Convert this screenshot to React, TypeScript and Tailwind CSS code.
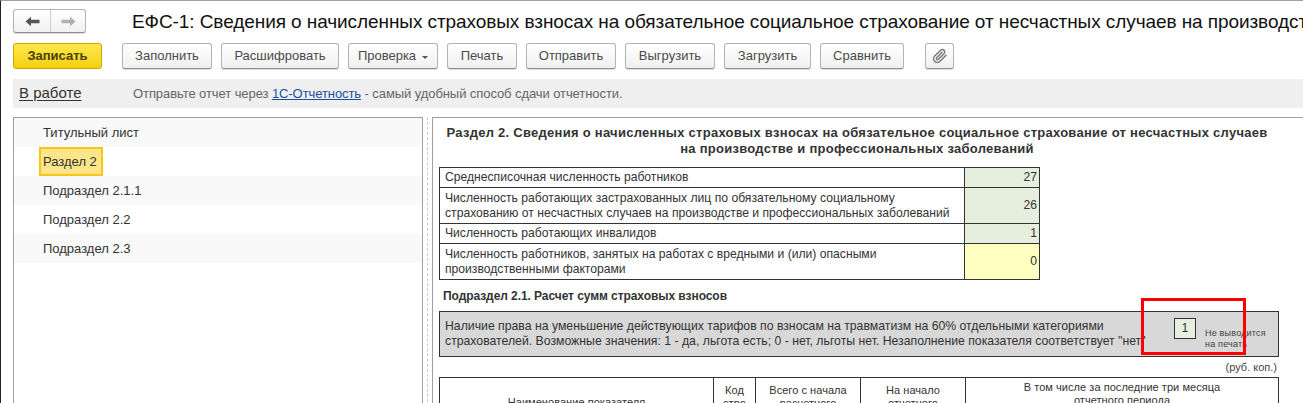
const toolbarButtons = [
  { label: 'Заполнить', width: 'w-[90px]' },
  { label: 'Расшифровать', width: 'w-[118px]' },
  { label: 'Проверка', width: 'w-[90px]', menu: true },
  { label: 'Печать', width: 'w-[70px]' },
  { label: 'Отправить', width: 'w-[90px]' },
  { label: 'Выгрузить', width: 'w-[90px]' },
  { label: 'Загрузить', width: 'w-[87px]' },
  { label: 'Сравнить', width: 'w-[84px]' },
]

const sections = ['Титульный лист', 'Раздел 2', 'Подраздел 2.1.1', 'Подраздел 2.2', 'Подраздел 2.3']

const summaryRows = [
  { text: ['Среднесписочная численность работников'], value: '27', h: 'h-[20px]', fill: 'bg-[#e6efdd]' },
  {
    text: [
      'Численность работающих застрахованных лиц по обязательному социальному',
      'страхованию от несчастных случаев на производстве и профессиональных заболеваний',
    ],
    value: '26',
    h: 'h-[36px]',
    fill: 'bg-[#e6efdd]',
  },
  { text: ['Численность работающих инвалидов'], value: '1', h: 'h-[20px]', fill: 'bg-[#e6efdd]' },
  {
    text: ['Численность работников, занятых на работах с вредными и (или) опасными', 'производственными факторами'],
    value: '0',
    h: 'h-[36px]',
    fill: 'bg-[#ffffc0]',
  },
]

function ArrowIcon({ dir, color }: { dir: 'left' | 'right'; color: string }) {
  return (
    <svg width="15" height="11" viewBox="0 0 15 11" className={dir === 'right' ? 'rotate-180' : ''}>
      <path d="M0.5 5.5 L6 0.8 L6 3.8 L14.5 3.8 L14.5 7.2 L6 7.2 L6 10.2 Z" fill={color} />
    </svg>
  )
}

function ClipIcon() {
  return (
    <svg width="16" height="16" viewBox="0 0 24 24" fill="none" stroke="#7a7a7a" strokeWidth="2.2" strokeLinecap="round">
      <path d="M21 11 L12 20 a5 5 0 0 1 -8 -8 L13 3.5 a3.4 3.4 0 0 1 5 5 L9.5 17 a1.7 1.7 0 0 1 -2.5 -2.5 L15 6.5" />
    </svg>
  )
}

function ToolButton({ label, width, menu }: { label: string; width: string; menu?: boolean }) {
  return (
    <button className={`${width} h-[26px] shrink-0 flex items-center justify-center gap-[6px] rounded-[3px] border border-[#b4b4b4] border-b-[#8e8e8e] bg-gradient-to-b from-white to-[#f0f0f0] text-[13px] text-[#4a4a4a] shadow-[0_1px_1px_rgba(0,0,0,0.15)]`}>
      {label}
      {menu && <span className="mt-[2px] border-x-[3px] border-t-[3px] border-x-transparent border-t-[#555]" />}
    </button>
  )
}

function HeadCell({ children, className = '' }: { children?: React.ReactNode; className?: string }) {
  return <td className={`border border-[#333] p-0 text-center ${className}`}>{children}</td>
}

export default function App() {
  return (
    <div className="relative w-[1303px] h-[403px] overflow-hidden bg-white border-t border-l border-t-[#a0a0a0] border-l-[#222] font-['Liberation_Sans',Arial,sans-serif]">
      {/* шапка */}
      <div className="flex items-center h-[24px] mt-[8px] ml-[12px]">
        <div className="flex w-[73px] h-[24px] shrink-0 rounded-[3px] border border-[#b4b4b4] border-b-[#8e8e8e] bg-gradient-to-b from-white to-[#f0f0f0] shadow-[0_1px_1px_rgba(0,0,0,0.15)]">
          <div className="w-[37px] flex items-center justify-center border-r border-[#d0d0d0]">
            <ArrowIcon dir="left" color="#555555" />
          </div>
          <div className="flex-1 flex items-center justify-center">
            <ArrowIcon dir="right" color="#b0b0b0" />
          </div>
        </div>
        <div className="ml-[46px] mt-[1px] text-[19px] tracking-[-0.08px] leading-[24px] text-[#111] whitespace-nowrap">
          ЕФС-1: Сведения о начисленных страховых взносах на обязательное социальное страхование от несчастных случаев на производстве и профессиональных заболеваниях
        </div>
      </div>

      {/* командная панель */}
      <div className="flex items-center h-[26px] mt-[10px] ml-[12px]">
        <button className="w-[89px] h-[26px] shrink-0 rounded-[3px] border border-[#c9a800] bg-gradient-to-b from-[#ffe94a] to-[#f5cf00] text-[13px] font-bold text-[#4a4000] mr-[20px]">
          Записать
        </button>
        <div className="flex gap-[9px]">
          {toolbarButtons.map((b) => (
            <ToolButton key={b.label} {...b} />
          ))}
        </div>
        <button className="w-[29px] h-[26px] ml-[21px] flex items-center justify-center rounded-[3px] border border-[#b4b4b4] border-b-[#8e8e8e] bg-gradient-to-b from-white to-[#f0f0f0] shadow-[0_1px_1px_rgba(0,0,0,0.15)]">
          <ClipIcon />
        </button>
      </div>

      {/* статус */}
      <div className="flex items-center h-[29px] mt-[10px] ml-[12px] pl-[6px] bg-[#efefef]">
        <span className="w-[114px] text-[15px] text-[#333] underline underline-offset-2">В работе</span>
        <span className="text-[13px] tracking-[-0.08px] text-[#666]">
          Отправьте отчет через <span className="text-[#1c4fa0] underline">1С-Отчетность</span> - самый удобный способ сдачи отчетности.
        </span>
      </div>

      <div className="flex mt-[9px] ml-[12px] h-[300px]">
        {/* список разделов */}
        <div className="w-[410px] shrink-0 border border-[#a0a0a0] border-b-0">
          {sections.map((s, i) => (
            <div key={s} className={`h-[29px] pl-[29px] flex items-center text-[13px] text-[#333] ${i % 2 === 0 ? 'bg-[#f9f9f9]' : 'bg-white'}`}>
              {s === 'Раздел 2' ? (
                <span className="-ml-[4px] h-[29px] w-[64px] pl-[2px] flex items-center bg-[#fde68a] border-2 border-[#fcc419]">{s}</span>
              ) : (
                s
              )}
            </div>
          ))}
        </div>

        {/* разделитель */}
        <div className="w-[9px] shrink-0 flex justify-center">
          <div className="h-full border-l border-dashed border-[#cccccc]" />
        </div>

        {/* форма */}
        <div className="flex-1 min-w-0 border-l border-t border-[#a0a0a0] pl-[6px] text-[#333]">
          <div className="w-[836px] pt-[7px] text-center text-[13px] leading-[16px] font-bold tracking-[0.27px] text-[#333]">
            <div>Раздел 2. Сведения о начисленных страховых взносах на обязательное социальное страхование от несчастных случаев</div>
            <div>на производстве и профессиональных заболеваний</div>
          </div>

          <table className="mt-[10px] w-[601px] border-collapse table-fixed text-[12.15px] leading-[15px]">
            <colgroup>
              <col className="w-[525px]" />
              <col />
            </colgroup>
            <tbody>
              {summaryRows.map((r) => (
                <tr key={r.value} className={r.h}>
                  <td className="border border-[#333] pl-[5px] py-0 align-middle whitespace-nowrap">
                    {r.text.map((t) => (
                      <div key={t}>{t}</div>
                    ))}
                  </td>
                  <td className={`border border-[#333] pr-[2px] text-right align-middle ${r.fill}`}>{r.value}</td>
                </tr>
              ))}
            </tbody>
          </table>

          <div className="mt-[9px] ml-[4px] text-[12px] tracking-[-0.07px] leading-[15px] font-bold text-[#333]">
            Подраздел 2.1. Расчет сумм страховых взносов
          </div>

          <div className="mt-[7px] w-[840px] h-[46px] flex border border-[#333] bg-[#d8d8d8] pl-[5px] text-[12.25px] leading-[15px]">
            <div className="pt-[7px] w-[729px] shrink-0 whitespace-nowrap">
              <div>Наличие права на уменьшение действующих тарифов по взносам на травматизм на 60% отдельными категориями</div>
              <div>страхователей. Возможные значения: 1 - да, льгота есть; 0 - нет, льготы нет. Незаполнение показателя соответствует "нет"</div>
            </div>
            <div className="mt-[6px] w-[22px] h-[21px] flex items-center justify-center border border-[#333] bg-[#e8efdf]">1</div>
            <div className="ml-[9px] pt-[16px] text-[9px] leading-[11px] tracking-[0.2px] text-[#444] whitespace-nowrap">
              <div>Не выводится</div>
              <div>на печать</div>
            </div>
          </div>

          <div className="w-[838px] mt-[3px] text-right text-[11px] leading-[15px] text-[#444]">(руб. коп.)</div>

          <table className="mt-[2px] w-[840px] border-collapse table-fixed text-[11px] tracking-[0.05px] leading-[13px]">
            <colgroup>
              <col className="w-[274px]" />
              <col className="w-[42px]" />
              <col className="w-[105px]" />
              <col className="w-[105px]" />
              <col />
            </colgroup>
            <tbody>
              <tr className="h-[50px]">
                <HeadCell className="align-middle">Наименование показателя</HeadCell>
                <HeadCell className="align-top pt-[6px]">
                  Код
                  <br />
                  стро
                </HeadCell>
                <HeadCell className="align-top pt-[6px]">
                  Всего с начала
                  <br />
                  расчетного
                </HeadCell>
                <HeadCell className="align-top pt-[6px]">
                  На начало
                  <br />
                  отчетного
                </HeadCell>
                <HeadCell className="align-top pt-[3px]">
                  В том числе за последние три месяца
                  <br />
                  отчетного периода
                </HeadCell>
              </tr>
            </tbody>
          </table>
        </div>
      </div>

      {/* красная рамка поверх формы */}
      <div className="absolute left-[1140px] top-[297px] w-[105px] h-[57px] border-[3px] border-[#ff0000]" />
    </div>
  )
}
